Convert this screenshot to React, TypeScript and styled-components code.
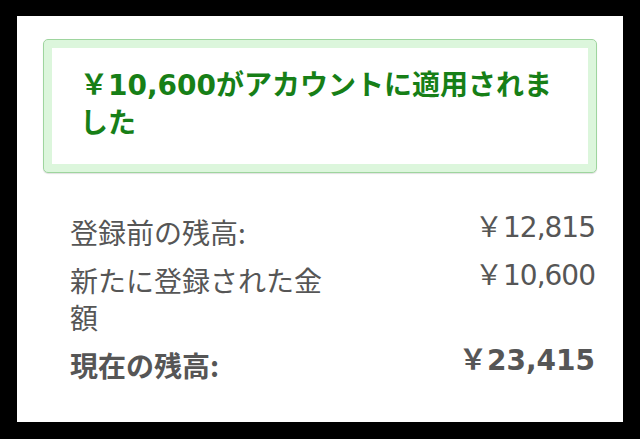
import React from "react";
import styled, { createGlobalStyle } from "styled-components";

const Global = createGlobalStyle`
  html, body {
    margin: 0;
    padding: 0;
    background: #000;
  }
  body {
    font-family: "Noto Sans CJK JP", "Noto Sans", sans-serif;
  }
`;

const Page = styled.div`
  width: 640px;
  height: 439px;
  padding: 16px 17px 17px 17px;
  box-sizing: border-box;
  background: #000;
`;

const Panel = styled.main`
  height: 406px;
  background: #fff;
  box-sizing: border-box;
  padding: 23px 26px 0 26px;
  display: flex;
  flex-direction: column;
`;

const Alert = styled.div`
  border: 1px solid #9ed59e;
  border-radius: 5px;
  background: #ffffff;
  box-shadow: inset 0 0 0 8px #dcf6dc, 0 1px 1px rgba(0, 0, 0, 0.12);
  padding: 24px 36px 32px 36px;
`;

const AlertTitle = styled.h2`
  margin: 0;
  font-size: 28px;
  line-height: 38px;
  font-weight: 700;
  color: #177f17;
`;

const Num = styled.span<{ $bold?: boolean }>`
  font-family: "DejaVu Sans", sans-serif;
  line-height: 1;
  letter-spacing: ${(p) => (p.$bold ? "0" : "-1px")};
`;

const Summary = styled.dl`
  margin: 41px 2px 0 27px;
  display: flex;
  flex-direction: column;
  gap: 11px;
`;

const Row = styled.div`
  display: grid;
  grid-template-columns: 1fr 1fr;
  align-items: start;
  color: #565656;
`;

const Label = styled.dt<{ $bold?: boolean }>`
  margin: 0;
  font-size: 28px;
  line-height: 37px;
  font-weight: ${(p) => (p.$bold ? 700 : 400)};
`;

const Value = styled.dd<{ $bold?: boolean }>`
  margin: 0;
  text-align: right;
  font-size: 28px;
  line-height: 20px;
  font-weight: ${(p) => (p.$bold ? 700 : 400)};
  white-space: nowrap;
`;

const Yen: React.FC<{ amount: string; bold?: boolean }> = ({ amount, bold }) => (
  <>
    <span>￥</span>
    <Num $bold={bold}>{amount}</Num>
  </>
);

export default function App() {
  return (
    <>
      <Global />
      <Page>
        <Panel>
          <Alert>
            <AlertTitle>
              <span>￥</span>
              <Num $bold>10,600</Num>
              <span>がアカウントに適用されま</span>
              <span>した</span>
            </AlertTitle>
          </Alert>
          <Summary>
            <Row>
              <Label>登録前の残高:</Label>
              <Value>
                <Yen amount="12,815" />
              </Value>
            </Row>
            <Row>
              <Label>新たに登録された金額</Label>
              <Value>
                <Yen amount="10,600" />
              </Value>
            </Row>
            <Row>
              <Label $bold>現在の残高:</Label>
              <Value $bold>
                <Yen amount="23,415" bold />
              </Value>
            </Row>
          </Summary>
        </Panel>
      </Page>
    </>
  );
}
